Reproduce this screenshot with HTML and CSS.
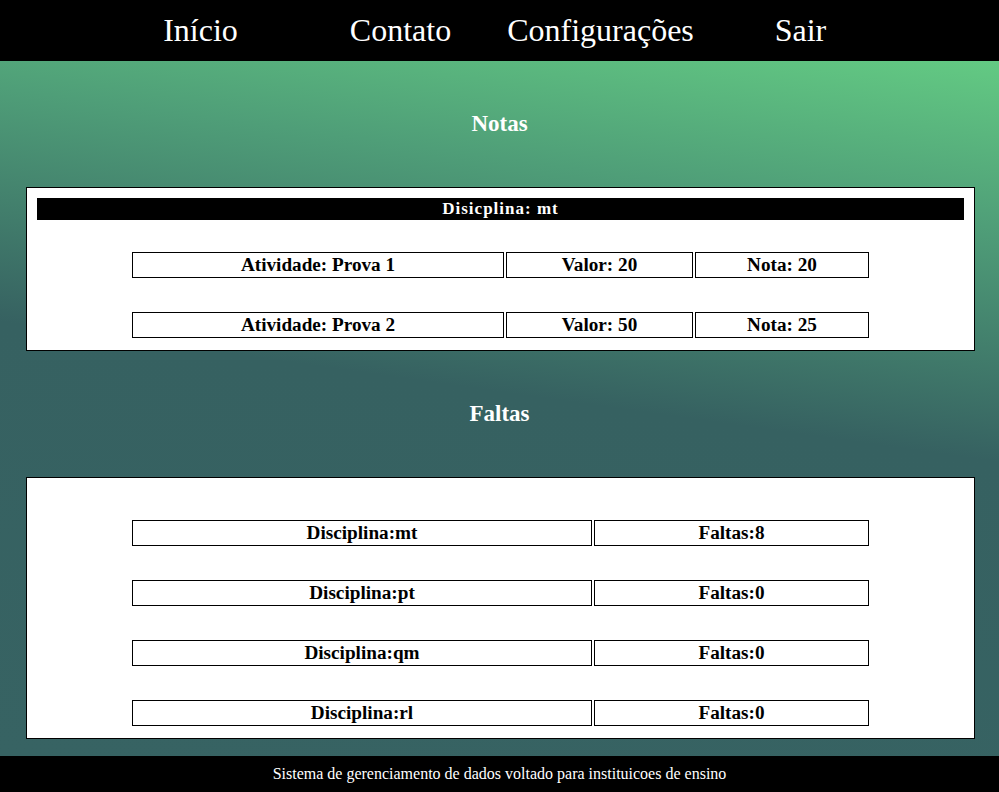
FILE: index.html
```html
<!DOCTYPE html>
<html lang="pt-BR">
<head>
    <meta charset="UTF-8">
    <meta name="viewport" content="width=device-width, initial-scale=1.0">
    <title>Notas e Faltas</title>
    <link rel="stylesheet" href="styles.css">
</head>
<body>

    <!-- Menu -->
    <nav class="menu">
        <a href="#">Início</a>
        <a href="#">Contato</a>
        <a href="#">Configurações</a>
        <a href="#">Sair</a>
    </nav>

    <main class="painel">

        <!-- Notas -->
        <h2 class="titulo">Notas</h2>
        <section class="cartao">
            <div class="disciplina">Disicplina: mt</div>
            <div class="linha">
                <div class="celula atividade">Atividade: Prova 1</div>
                <div class="celula valor">Valor: 20</div>
                <div class="celula nota">Nota: 20</div>
            </div>
            <div class="linha">
                <div class="celula atividade">Atividade: Prova 2</div>
                <div class="celula valor">Valor: 50</div>
                <div class="celula nota">Nota: 25</div>
            </div>
        </section>

        <!-- Faltas -->
        <h2 class="titulo">Faltas</h2>
        <section class="cartao cartao-faltas">
            <div class="linha">
                <div class="celula materia">Disciplina:mt</div>
                <div class="celula faltas">Faltas:8</div>
            </div>
            <div class="linha">
                <div class="celula materia">Disciplina:pt</div>
                <div class="celula faltas">Faltas:0</div>
            </div>
            <div class="linha">
                <div class="celula materia">Disciplina:qm</div>
                <div class="celula faltas">Faltas:0</div>
            </div>
            <div class="linha">
                <div class="celula materia">Disciplina:rl</div>
                <div class="celula faltas">Faltas:0</div>
            </div>
        </section>

    </main>

    <footer class="rodape">Sistema de gerenciamento de dados voltado para instituicoes de ensino</footer>

</body>
</html>
```

FILE: styles.css
```css
/* Reset */
* {
    box-sizing: border-box;
}

body {
    margin: 0;
    background: #000;
    font-family: 'Liberation Serif', 'Times New Roman', serif;
    color: #000;
}

/* Menu */
.menu {
    height: 61px;
    padding-left: 2px;
    background: #000;
    display: flex;
    justify-content: center;
    align-items: center;
}

.menu a {
    width: 200px;
    text-align: center;
    color: #fff;
    text-decoration: none;
    font-size: 32px;
}

/* Conteudo */
.painel {
    display: flow-root;
    background: linear-gradient(188deg, #63ca83 0%, #4f9e78 20%, #366161 48%, #376363 100%);
}

.titulo {
    margin: 49px 0;
    font-size: 23px;
    line-height: 28px;
    text-align: center;
    color: #fff;
}

.cartao {
    margin: 0 24px 0 26px;
    padding: 10px;
    background: #fff;
    border: 1px solid #000;
}

.cartao-faltas {
    margin-bottom: 17px;
}

.disciplina {
    height: 22px;
    line-height: 21px;
    background: #000;
    color: #fff;
    font-size: 17px;
    font-weight: bold;
    letter-spacing: 1px;
    text-align: center;
}

.linha {
    display: flex;
    gap: 2px;
    padding: 2px;
    width: 741px;
    margin: 30px auto 0;
}

.celula {
    height: 26px;
    line-height: 24px;
    border: 1px solid #000;
    font-size: 19.2px;
    font-weight: bold;
    text-align: center;
}

.atividade { width: 372px; }
.valor { width: 187px; }
.nota { width: 174px; }
.materia { width: 460px; }
.faltas { width: 275px; }

/* Rodape */
.rodape {
    height: 36px;
    line-height: 36px;
    background: #000;
    color: #fff;
    font-size: 16px;
    text-align: center;
}
```
